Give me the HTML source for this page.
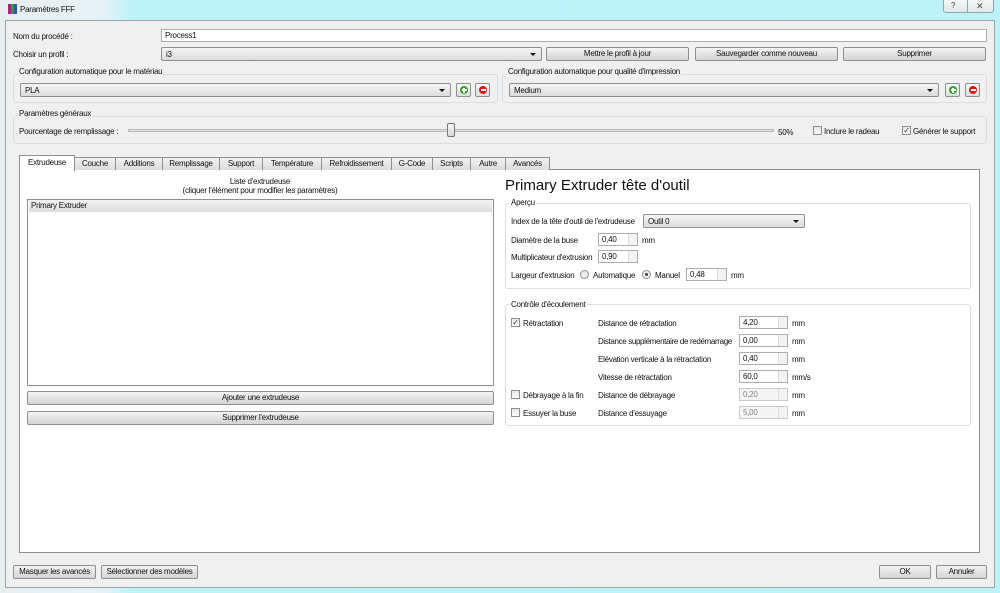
<!DOCTYPE html>
<html><head><meta charset="utf-8"><style>
*{box-sizing:border-box;margin:0;padding:0}
body{width:1000px;height:593px;overflow:hidden;background:linear-gradient(90deg,#e6eef0 0,#e8f2f4 10%,#bff3fa 13%,#bdf2f9 100%);font-family:"Liberation Sans",sans-serif;font-size:8px;letter-spacing:-0.25px;color:#111;position:relative}
.a{position:absolute;white-space:nowrap}
.client{position:absolute;left:5px;top:20px;width:990px;height:568px;background:#f0f0f0;border:1px solid #9aa8ac}
.inp{position:absolute;background:#fff;border:1px solid #abadb3;height:13px;padding:2px 3px;font-size:8px;line-height:8px}
.inp.dis{background:#f4f4f4;color:#888;border-color:#ccc}
.btn{position:absolute;border:1px solid #8e8f8f;border-radius:2px;background:linear-gradient(#f4f4f4,#e2e2e2 50%,#d5d5d5);text-align:center;font-size:8px;line-height:12px;height:14px}
.cmb{position:absolute;border:1px solid #8e8f8f;border-radius:2px;background:linear-gradient(#f5f5f5,#dcdcdc);height:14px;padding:2px 4px;font-size:8px;line-height:9px}
.cmb:after{content:"";position:absolute;right:5px;top:5px;border:3px solid transparent;border-top:3px solid #111;border-bottom:0}
.grp{position:absolute;border:1px solid #d5dfe5;border-radius:3px}
.gl{position:absolute;background:#f0f0f0;padding:0 1px;font-size:8px}
.ic{position:absolute;width:15px;height:14px;border:1px solid #8e8f8f;border-radius:2px;background:linear-gradient(#f6f6f6,#dedede)}
.ic i{position:absolute;left:3px;top:2px;width:8px;height:8px;border-radius:50%}
.ic i:before{content:"";position:absolute;left:1.5px;top:3.2px;width:5px;height:1.6px;background:#fff}
.ic.p i{background:#2ea82a}.ic.p i:after{content:"";position:absolute;left:3.2px;top:1.5px;width:1.6px;height:5px;background:#fff}
.ic.m i{background:#d81818}
.cb{position:absolute;width:9px;height:9px;border:1px solid #8e8f8f;background:linear-gradient(#e6e6e6,#fafafa);font-size:8px;line-height:7px;text-align:center;color:#334}
.rd{position:absolute;width:9px;height:9px;border:1px solid #8e8f8f;border-radius:50%;background:#eee}
.sp{position:absolute;right:0;top:0;width:9px;height:11px;border-left:1px solid #ddd;background:#f3f3f3}
.tab{position:absolute;top:157px;height:13px;border:1px solid #8e8f8f;border-bottom:none;background:linear-gradient(#f2f2f2,#dcdcdc);text-align:center;line-height:12px;font-size:8px}
</style></head><body>
<div class="a" style="left:8px;top:4px;width:3px;height:10px;background:#b01f7a"></div>
<div class="a" style="left:11px;top:4px;width:3px;height:10px;background:#2a9e3a"></div>
<div class="a" style="left:14px;top:4px;width:3px;height:10px;background:#2657b4"></div>
<div class="a" style="left:20px;top:5px;font-size:8px">Paramètres FFF</div>
<div class="a" style="left:943px;top:0;width:51px;height:13px;border:1px solid #8aa;border-top:none;border-radius:0 0 3px 3px;background:linear-gradient(#f6f6f6,#e0e8ea)"></div>
<div class="a" style="left:967px;top:0;width:1px;height:13px;background:#8aa"></div>
<div class="a" style="left:951px;top:1px;font-size:8px;color:#444">?</div>
<div class="a" style="left:976px;top:1px;font-size:9px;color:#444">✕</div>
<div class="client"></div>

<div class="a" style="left:13px;top:32px">Nom du procédé :</div>
<div class="inp" style="left:161px;top:29px;width:826px">Process1</div>
<div class="a" style="left:13px;top:50px">Choisir un profil :</div>
<div class="cmb" style="left:161px;top:47px;width:381px">i3</div>
<div class="btn" style="left:546px;top:47px;width:143px">Mettre le profil à jour</div>
<div class="btn" style="left:695px;top:47px;width:143px">Sauvegarder comme nouveau</div>
<div class="btn" style="left:843px;top:47px;width:143px">Supprimer</div>

<div class="grp" style="left:13px;top:74px;width:485px;height:29px"></div>
<div class="gl" style="left:18px;top:67px">Configuration automatique pour le matériau</div>
<div class="cmb" style="left:20px;top:83px;width:431px">PLA</div>
<div class="ic p" style="left:456px;top:83px"><i></i></div>
<div class="ic m" style="left:475px;top:83px"><i></i></div>
<div class="grp" style="left:502px;top:74px;width:485px;height:29px"></div>
<div class="gl" style="left:507px;top:67px">Configuration automatique pour qualité d'impression</div>
<div class="cmb" style="left:509px;top:83px;width:430px">Medium</div>
<div class="ic p" style="left:945px;top:83px"><i></i></div>
<div class="ic m" style="left:965px;top:83px"><i></i></div>

<div class="grp" style="left:13px;top:116px;width:974px;height:28px"></div>
<div class="gl" style="left:18px;top:109px">Paramètres généraux</div>
<div class="a" style="left:19px;top:127px">Pourcentage de remplissage :</div>
<div class="a" style="left:128px;top:129px;width:646px;height:3px;border:1px solid #b8b8b8;background:#e4e4e4"></div>
<div class="a" style="left:447px;top:123px;width:8px;height:14px;border:1px solid #777;border-radius:2px;background:linear-gradient(#f8f8f8,#d8d8d8)"></div>
<div class="a" style="left:778px;top:128px">50%</div>
<div class="cb" style="left:813px;top:126px"></div>
<div class="a" style="left:824px;top:127px">Inclure le radeau</div>
<div class="cb" style="left:902px;top:126px">✓</div>
<div class="a" style="left:913px;top:127px">Générer le support</div>

<div class="a" style="left:19px;top:169px;width:961px;height:384px;background:#fff;border:1px solid #8e8f8f"></div>
<div class="tab" style="left:74px;width:42px">Couche</div>
<div class="tab" style="left:115px;width:48px">Additions</div>
<div class="tab" style="left:162px;width:58px">Remplissage</div>
<div class="tab" style="left:219px;width:44px">Support</div>
<div class="tab" style="left:262px;width:60px">Température</div>
<div class="tab" style="left:321px;width:71px">Refroidissement</div>
<div class="tab" style="left:391px;width:42px">G-Code</div>
<div class="tab" style="left:432px;width:39px">Scripts</div>
<div class="tab" style="left:470px;width:36px">Autre</div>
<div class="tab" style="left:505px;width:45px">Avancés</div>
<div class="tab" style="left:19px;top:155px;width:56px;height:16px;background:#fff;line-height:14px">Extrudeuse</div>

<div class="a" style="left:27px;top:177px;width:466px;text-align:center;line-height:9px">Liste d'extrudeuse<br>(cliquer l'élément pour modifier les paramètres)</div>
<div class="a" style="left:27px;top:199px;width:467px;height:187px;border:1px solid #8e8f8f;background:#fff"></div>
<div class="a" style="left:29px;top:200px;width:463px;height:12px;background:linear-gradient(#f2f2f2,#dedede);padding:1px 2px;font-size:8px">Primary Extruder</div>
<div class="btn" style="left:27px;top:391px;width:467px">Ajouter une extrudeuse</div>
<div class="btn" style="left:27px;top:411px;width:467px">Supprimer l'extrudeuse</div>

<div class="a" style="left:505px;top:177px;font-size:15px;letter-spacing:0">Primary Extruder tête d'outil</div>
<div class="grp" style="left:505px;top:203px;width:466px;height:86px;border-color:#dde"></div>
<div class="gl" style="left:510px;top:198px;background:#fff">Aperçu</div>
<div class="a" style="left:511px;top:217px">Index de la tête d'outil de l'extrudeuse</div>
<div class="cmb" style="left:643px;top:214px;width:162px">Outil 0</div>
<div class="a" style="left:511px;top:236px">Diamètre de la buse</div>
<div class="inp" style="left:598px;top:233px;width:40px">0,40<div class="sp"></div></div>
<div class="a" style="left:642px;top:236px">mm</div>
<div class="a" style="left:511px;top:253px">Multiplicateur d'extrusion</div>
<div class="inp" style="left:598px;top:250px;width:40px">0,90<div class="sp"></div></div>
<div class="a" style="left:511px;top:271px">Largeur d'extrusion</div>
<div class="rd" style="left:580px;top:270px"></div>
<div class="a" style="left:593px;top:271px">Automatique</div>
<div class="rd" style="left:642px;top:270px"><div style="position:absolute;left:2px;top:2px;width:3px;height:3px;border-radius:50%;background:#246"></div></div>
<div class="a" style="left:655px;top:271px">Manuel</div>
<div class="inp" style="left:686px;top:268px;width:41px">0,48<div class="sp"></div></div>
<div class="a" style="left:731px;top:271px">mm</div>

<div class="grp" style="left:505px;top:304px;width:466px;height:122px;border-color:#dde"></div>
<div class="gl" style="left:510px;top:300px;background:#fff">Contrôle d'écoulement</div>
<div class="cb" style="left:511px;top:318px">✓</div>
<div class="a" style="left:523px;top:319px">Rétractation</div>
<div class="cb" style="left:511px;top:390px"></div>
<div class="a" style="left:523px;top:391px">Débrayage à la fin</div>
<div class="cb" style="left:511px;top:408px"></div>
<div class="a" style="left:523px;top:409px">Essuyer la buse</div>
<div class="a" style="left:598px;top:319px">Distance de rétractation</div>
<div class="a" style="left:598px;top:337px;letter-spacing:-0.35px">Distance supplémentaire de redémarrage</div>
<div class="a" style="left:598px;top:355px">Elévation verticale à la rétractation</div>
<div class="a" style="left:598px;top:373px">Vitesse de rétractation</div>
<div class="a" style="left:598px;top:391px">Distance de débrayage</div>
<div class="a" style="left:598px;top:409px">Distance d'essuyage</div>
<div class="inp" style="left:739px;top:316px;width:49px">4,20<div class="sp"></div></div>
<div class="inp" style="left:739px;top:334px;width:49px">0,00<div class="sp"></div></div>
<div class="inp" style="left:739px;top:352px;width:49px">0,40<div class="sp"></div></div>
<div class="inp" style="left:739px;top:370px;width:49px">60,0<div class="sp"></div></div>
<div class="inp dis" style="left:739px;top:388px;width:49px">0,20<div class="sp"></div></div>
<div class="inp dis" style="left:739px;top:406px;width:49px">5,00<div class="sp"></div></div>
<div class="a" style="left:792px;top:319px">mm</div>
<div class="a" style="left:792px;top:337px">mm</div>
<div class="a" style="left:792px;top:355px">mm</div>
<div class="a" style="left:792px;top:373px">mm/s</div>
<div class="a" style="left:792px;top:391px">mm</div>
<div class="a" style="left:792px;top:409px">mm</div>

<div class="btn" style="left:13px;top:565px;width:83px">Masquer les avancés</div>
<div class="btn" style="left:101px;top:565px;width:97px">Sélectionner des modèles</div>
<div class="btn" style="left:879px;top:565px;width:52px">OK</div>
<div class="btn" style="left:936px;top:565px;width:51px">Annuler</div>
</body></html>
